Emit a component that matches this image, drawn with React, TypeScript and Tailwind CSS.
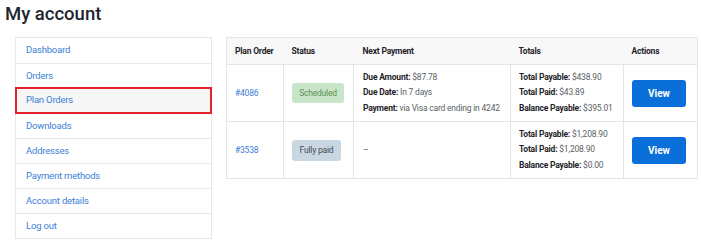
const navItems = [
  'Dashboard',
  'Orders',
  'Plan Orders',
  'Downloads',
  'Addresses',
  'Payment methods',
  'Account details',
  'Log out',
]

interface PlanOrder {
  id: string
  status: 'scheduled' | 'paid'
  next: { label: string; value: string }[] | null
  totals: { label: string; value: string }[]
}

const orders: PlanOrder[] = [
  {
    id: '#4086',
    status: 'scheduled',
    next: [
      { label: 'Due Amount:', value: '$87.78' },
      { label: 'Due Date:', value: 'In 7 days' },
      { label: 'Payment:', value: 'via Visa card ending in 4242' },
    ],
    totals: [
      { label: 'Total Payable:', value: '$438.90' },
      { label: 'Total Paid:', value: '$43.89' },
      { label: 'Balance Payable:', value: '$395.01' },
    ],
  },
  {
    id: '#3538',
    status: 'paid',
    next: null,
    totals: [
      { label: 'Total Payable:', value: '$1,208.90' },
      { label: 'Total Paid:', value: '$1,208.90' },
      { label: 'Balance Payable:', value: '$0.00' },
    ],
  },
]

function LabelLines({ lines }: { lines: { label: string; value: string }[] }) {
  return (
    <div className="flex flex-col">
      {lines.map((line) => (
        <div key={line.label} className="h-[15.5px] leading-[15.5px] whitespace-nowrap">
          <span className="font-bold text-[#1f2329]">{line.label}</span>{' '}
          <span className="text-[#5b5f66]">{line.value}</span>
        </div>
      ))}
    </div>
  )
}

export default function App() {
  return (
    <div className="w-[701px] h-[241px] bg-white overflow-hidden font-['Roboto',sans-serif]">
      <h1 className="pl-[5px] pt-[1px] h-[37px] text-[18.5px] leading-[26px] font-medium text-[#1e2530]">
        My account
      </h1>

      <div className="flex items-start">
        {/* Sidebar */}
        <nav className="ml-[15px] w-[197px] border border-[#e6e7ea] bg-white">
          {navItems.map((item, i) => (
            <div
              key={item}
              className={
                item === 'Plan Orders'
                  ? 'relative h-[25px] flex items-center pl-[10px] text-[9.5px] tracking-[-0.2px] text-[#3d80d6] bg-[#f6f6f7] outline-2 outline-[#e3222c] -outline-offset-1 z-10'
                  : `h-[25px] flex items-center pl-[10px] text-[9.5px] tracking-[-0.2px] text-[#3d80d6] ${i > 0 ? 'border-t border-[#e6e7ea]' : ''}`
              }
            >
              {item}
            </div>
          ))}
        </nav>

        {/* Table */}
        <table className="ml-[14px] w-[471px] border-collapse border border-[#e4e5e8] text-[8.5px] tracking-[-0.2px] table-fixed">
          <colgroup>
            <col className="w-[57px]" />
            <col className="w-[70px]" />
            <col className="w-[157px]" />
            <col className="w-[113px]" />
            <col className="w-[74px]" />
          </colgroup>
          <thead>
            <tr className="h-[27px] bg-[#f8f8f9] border-b border-[#e4e5e8]">
              <th className="text-left font-bold pl-[8px] text-[#1f2329] whitespace-nowrap">Plan Order</th>
              <th className="text-left font-bold pl-[8px] text-[#1f2329] whitespace-nowrap">Status</th>
              <th className="text-left font-bold pl-[9px] text-[#1f2329] whitespace-nowrap">Next Payment</th>
              <th className="text-left font-bold pl-[8px] text-[#1f2329] whitespace-nowrap">Totals</th>
              <th className="text-left font-bold pl-[8px] text-[#1f2329] whitespace-nowrap">Actions</th>
            </tr>
          </thead>
          <tbody>
            {orders.map((order) => (
              <tr key={order.id} className="h-[57px] border-b border-[#e4e5e8]">
                <td className="pl-[8px] text-[#3d80d6] border-r border-[#e4e5e8]">{order.id}</td>
                <td className="pl-[8px] border-r border-[#e4e5e8]">
                  {order.status === 'scheduled' ? (
                    <span className="inline-flex items-center justify-center w-[52px] h-[20px] rounded-[3px] bg-[#c9e5c8] text-[#5c8f58]">
                      Scheduled
                    </span>
                  ) : (
                    <span className="inline-flex items-center justify-center w-[49px] h-[21px] rounded-[3px] bg-[#c9d7e2] text-[#454b53]">
                      Fully paid
                    </span>
                  )}
                </td>
                <td className="pl-[9px] border-r border-[#e4e5e8]">
                  {order.next ? (
                    <LabelLines lines={order.next} />
                  ) : (
                    <span className="text-[#5b5f66]">–</span>
                  )}
                </td>
                <td className="pl-[8px] border-r border-[#e4e5e8]">
                  <LabelLines lines={order.totals} />
                </td>
                <td className="pl-[8px]">
                  <button className="w-[54px] h-[27px] rounded-[3px] bg-[#0b6fd9] text-white font-bold text-[10px] tracking-normal">
                    View
                  </button>
                </td>
              </tr>
            ))}
          </tbody>
        </table>
      </div>
    </div>
  )
}
